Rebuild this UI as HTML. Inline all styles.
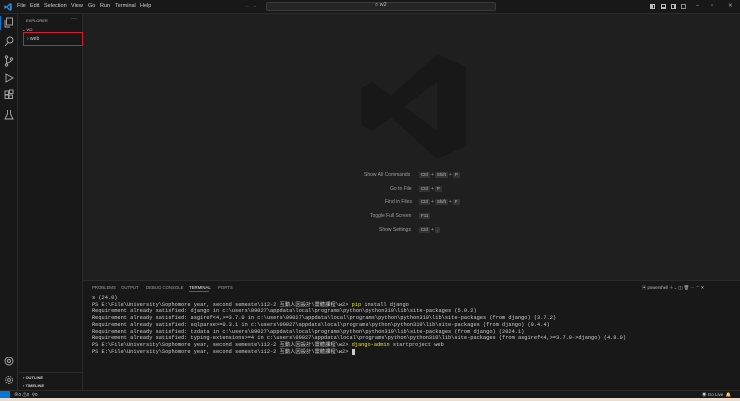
<!DOCTYPE html>
<html><head><meta charset="utf-8"><style>
*{margin:0;padding:0;box-sizing:border-box}
body{width:740px;height:401px;background:#1f1f1f;font-family:"Liberation Sans","Noto Sans CJK TC",sans-serif;color:#ccc;position:relative;overflow:hidden}
.abs{position:absolute}
#title{left:0;top:0;width:740px;height:14px;background:#181818;border-bottom:1px solid #2b2b2b}
#title span.m{position:absolute;top:3px;font-size:5.5px;color:#ccc}
#act{left:0;top:14px;width:18px;height:376px;background:#181818;border-right:1px solid #2b2b2b}
#side{left:18px;top:14px;width:65px;height:376px;background:#181818;border-right:1px solid #2b2b2b}
#panel{left:83px;top:280px;width:657px;height:110px;background:#181818;border-top:1px solid #2b2b2b}
#status{left:0;top:390px;width:740px;height:8px;background:#181818;border-top:1px solid #2b2b2b}
#strip{left:0;top:398px;width:740px;height:3px;background:#e8ddd0}
.term{position:absolute;left:92px;top:295px;font-family:"Liberation Mono","Noto Sans CJK TC",monospace;font-size:5.3px;line-height:6.7px;color:#cccccc;white-space:pre}
.y{color:#e5e510}
.kb{font-size:5px;color:#9d9d9d;position:absolute;white-space:nowrap}
.k{display:inline-block;background:#333;border-radius:1px;padding:0 2px;margin:0 1px;font-size:4.5px;color:#bbb;line-height:6px}
.tab{position:absolute;top:285px;font-size:4.3px;color:#9d9d9d}
</style></head><body>
<div id="title" class="abs">
<svg class="abs" style="left:4px;top:3px" width="8" height="8" viewBox="0 0 100 100"><path fill="#2a8ad6" d="M74 2L97 13V87L74 98L30 58L12 72L3 67V33L12 28L30 42Z M74 27L44 50L74 73Z" fill-rule="evenodd"/></svg>
<span class="m" style="left:17px">File</span><span class="m" style="left:30px">Edit</span><span class="m" style="left:44px">Selection</span><span class="m" style="left:71px">View</span><span class="m" style="left:88px">Go</span><span class="m" style="left:100px">Run</span><span class="m" style="left:115px">Terminal</span><span class="m" style="left:140px">Help</span>
<span class="m" style="left:245px;color:#666">← →</span>
<div class="abs" style="left:266px;top:2px;width:230px;height:9px;background:#252525;border:1px solid #3a3a3a;border-radius:2px"></div>
<span class="m" style="left:375px;top:2px;color:#bbb">⌕ w2</span>
<div class="abs" style="left:650px;top:4px;width:5px;height:5px;border:1px solid #bbb;border-left-width:3px"></div>
<div class="abs" style="left:661px;top:4px;width:5px;height:5px;border:1px solid #bbb;border-bottom-width:2px"></div>
<div class="abs" style="left:671px;top:4px;width:5px;height:5px;border:1px solid #bbb;border-right-width:2px"></div>
<div class="abs" style="left:681px;top:4px;width:5px;height:5px;border:1px solid #888"></div>
<span class="m" style="left:696px;color:#aaa">–</span><span class="m" style="left:711px;color:#aaa">▫</span><span class="m" style="left:728px;color:#aaa">✕</span>
</div>
<div id="act" class="abs">
<div class="abs" style="left:0;top:2px;width:1px;height:14px;background:#0078d4"></div>
<svg class="abs" style="left:4px;top:3px" width="10" height="160" fill="none" stroke="#aaa" stroke-width="0.9">
<rect x="2.5" y="1" width="6" height="7"/><path d="M1 3v7h5"/>
<circle cx="6" cy="23" r="3"/><path d="M4 25.5L1 29"/>
<circle cx="2.5" cy="40" r="1.2"/><circle cx="2.5" cy="48" r="1.2"/><circle cx="7.5" cy="42" r="1.2"/><path d="M2.5 41v6M7.5 43c0 3-5 2-5 4"/>
<path d="M2 57l7 4-7 4z"/>
<rect x="1" y="78" width="3.5" height="3.5"/><rect x="5" y="78" width="3.5" height="3.5"/><rect x="1" y="74" width="3.5" height="3.5"/><rect x="5.5" y="73" width="3.5" height="3.5"/>
<path d="M3.5 93v4l-2.5 5h8l-2.5-5v-4"/>
</svg>
<svg class="abs" style="left:3px;top:343px" width="12" height="30" fill="none" stroke="#aaa" stroke-width="0.9"><circle cx="6" cy="4" r="4"/><circle cx="6" cy="4" r="1.5"/><circle cx="6" cy="23" r="3.5" stroke-dasharray="1.5 1"/><circle cx="6" cy="23" r="1.4"/></svg>
</div>
<div id="side" class="abs">
<span class="abs" style="left:8px;top:4px;font-size:4px;color:#bbb">EXPLORER</span>
<span class="abs" style="left:53px;top:2px;font-size:6px;color:#bbb">···</span>
<span class="abs" style="left:4px;top:13px;font-size:4px;color:#bbb">⌄ W2</span>
<div class="abs" style="left:5px;top:18px;width:60px;height:14px;border:1.5px solid #d0202c"></div>
<span class="abs" style="left:9px;top:22px;font-size:5px;color:#ccc">› web</span>
<div class="abs" style="left:0;top:358px;width:65px;height:1px;background:#2b2b2b"></div>
<span class="abs" style="left:5px;top:361px;font-size:4px;color:#ccc;font-weight:bold">› OUTLINE</span>
<span class="abs" style="left:5px;top:369px;font-size:4px;color:#ccc;font-weight:bold">› TIMELINE</span>
</div>
<svg class="abs" style="left:358px;top:53px" width="110" height="107" viewBox="0 0 100 100" preserveAspectRatio="none"><path fill="#181818" fill-rule="evenodd" d="M72 1L98 13V87L72 99L30 60L13 73L3 67V33L13 27L30 40Z M72 27L42 50L72 73Z"/></svg>
<div class="kb" style="left:364px;top:172px">Show All Commands</div><div class="kb" style="left:418px;top:172px"><span class="k">Ctrl</span>+<span class="k">Shift</span>+<span class="k">P</span></div>
<div class="kb" style="left:390px;top:186px">Go to File</div><div class="kb" style="left:418px;top:186px"><span class="k">Ctrl</span>+<span class="k">P</span></div>
<div class="kb" style="left:385px;top:199px">Find in Files</div><div class="kb" style="left:418px;top:199px"><span class="k">Ctrl</span>+<span class="k">Shift</span>+<span class="k">F</span></div>
<div class="kb" style="left:370px;top:213px">Toggle Full Screen</div><div class="kb" style="left:418px;top:213px"><span class="k">F11</span></div>
<div class="kb" style="left:379px;top:227px">Show Settings</div><div class="kb" style="left:418px;top:227px"><span class="k">Ctrl</span>+<span class="k">,</span></div>
<div id="panel" class="abs"></div>
<span class="tab" style="left:92px">PROBLEMS</span><span class="tab" style="left:121px">OUTPUT</span><span class="tab" style="left:146px">DEBUG CONSOLE</span><span class="tab" style="left:189px;color:#e7e7e7">TERMINAL</span><div class="abs" style="left:189px;top:291px;width:20px;height:1px;background:#0078d4"></div><span class="tab" style="left:218px">PORTS</span>
<span class="tab" style="left:642px;color:#bbb">▣ powershell ＋⌄ ◫ 🗑 ··· ⌃ ✕</span>
<div class="term">s (24.0)
PS E:\File\University\Sophomore year, second semeste\112-2 互動人因設計\靈體課程\w2> <span class="y">pip</span> install django
Requirement already satisfied: django in c:\users\09027\appdata\local\programs\python\python310\lib\site-packages (5.0.2)
Requirement already satisfied: asgiref&lt;4,&gt;=3.7.0 in c:\users\09027\appdata\local\programs\python\python310\lib\site-packages (from django) (3.7.2)
Requirement already satisfied: sqlparse&gt;=0.3.1 in c:\users\09027\appdata\local\programs\python\python310\lib\site-packages (from django) (0.4.4)
Requirement already satisfied: tzdata in c:\users\09027\appdata\local\programs\python\python310\lib\site-packages (from django) (2024.1)
Requirement already satisfied: typing-extensions&gt;=4 in c:\users\09027\appdata\local\programs\python\python310\lib\site-packages (from asgiref&lt;4,&gt;=3.7.0-&gt;django) (4.9.0)
PS E:\File\University\Sophomore year, second semeste\112-2 互動人因設計\靈體課程\w2> <span class="y">django-admin</span> startproject web
PS E:\File\University\Sophomore year, second semeste\112-2 互動人因設計\靈體課程\w2> <span style="background:#ccc">&nbsp;</span></div>
<div id="status" class="abs">
<div class="abs" style="left:0;top:0;width:10px;height:8px;background:#0078d4"></div>
<span class="abs" style="left:14px;top:1px;font-size:4.5px;color:#ccc">⊗0 ⚠0 &nbsp;⚲0</span>
<span class="abs" style="left:702px;top:1px;font-size:4.5px;color:#ccc">◉ Go Live &nbsp;🔔</span>
</div>
<div id="strip" class="abs"></div>
</body></html>
